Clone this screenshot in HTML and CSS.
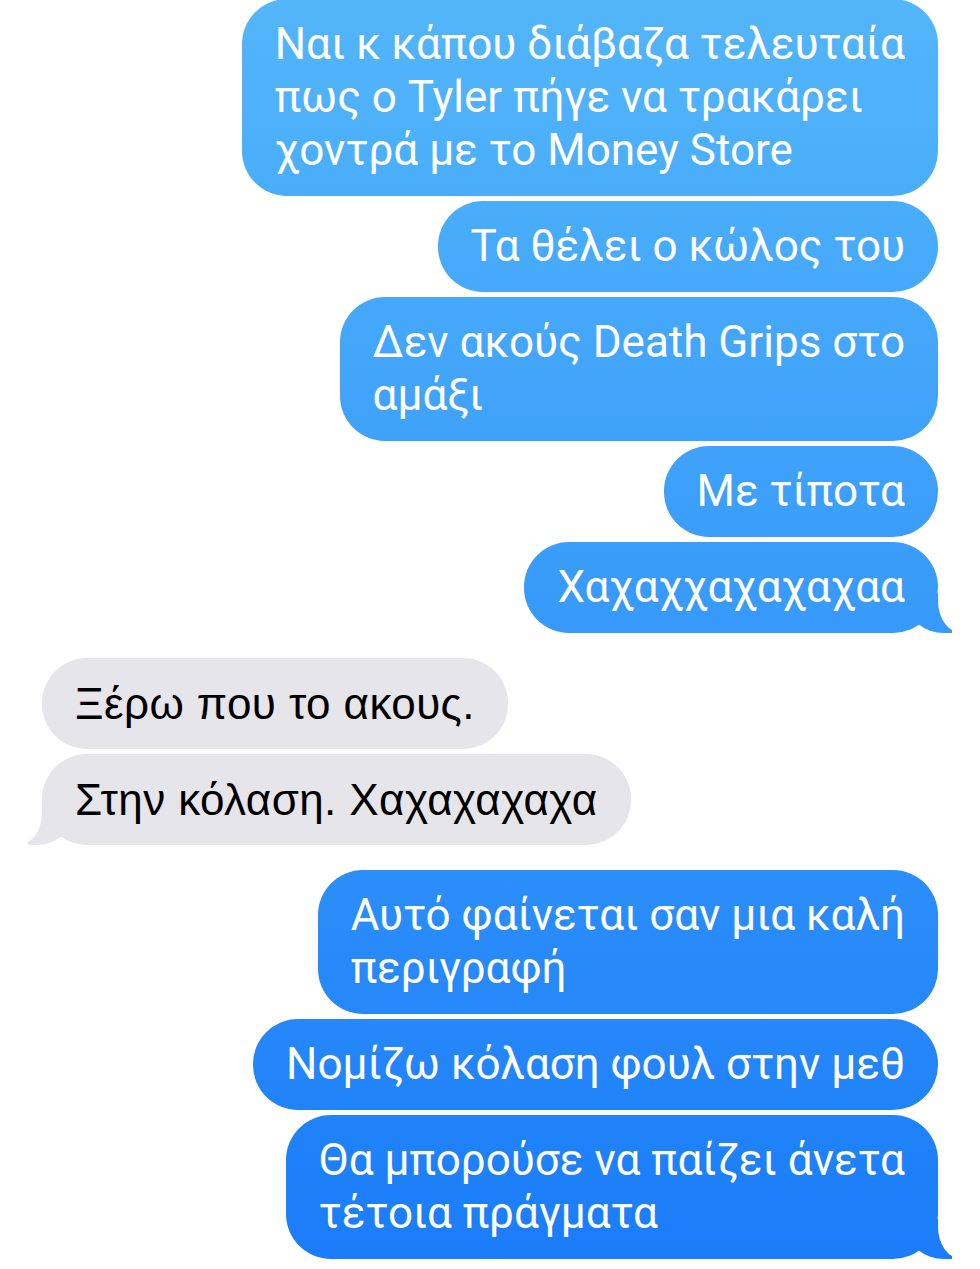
FILE: index.html
```html
<!DOCTYPE html>
<html lang="el">
<head>
  <meta charset="UTF-8">
  <title>Μηνύματα</title>
  <meta name="viewport" content="width=device-width, initial-scale=1.0">
  <link rel="stylesheet" href="styles.css">
</head>
<body>
  <div class="chat">
    <div class="group sent">
      <p class="bubble">Ναι κ κάπου διάβαζα τελευταία<br>πως ο Tyler πήγε να τρακάρει<br>χοντρά με το Money Store</p>
      <p class="bubble">Τα θέλει ο κώλος του</p>
      <p class="bubble">Δεν ακούς Death Grips στο<br>αμάξι</p>
      <p class="bubble">Με τίποτα</p>
      <p class="bubble tail">Χαχαχχαχαχαχαα</p>
    </div>

    <div class="group received">
      <p class="bubble">Ξέρω που το ακους.</p>
      <p class="bubble tail">Στην κόλαση. Χαχαχαχαχα</p>
    </div>

    <div class="group sent">
      <p class="bubble">Αυτό φαίνεται σαν μια καλή<br>περιγραφή</p>
      <p class="bubble">Νομίζω κόλαση φουλ στην μεθ</p>
      <p class="bubble tail">Θα μπορούσε να παίζει άνετα<br>τέτοια πράγματα</p>
    </div>
  </div>
</body>
</html>
```

FILE: styles.css
```css
body {
  margin: 0;
  background: #fff;
  font-family: 'Roboto', 'Noto Sans', sans-serif;
}

.chat {
  display: flex;
  flex-direction: column;
  gap: 25px;
  padding: 0 42px;
  margin-top: -1px;
}

.group {
  display: flex;
  flex-direction: column;
  gap: 5px;
}

.sent {
  align-items: flex-end;
}

.received {
  align-items: flex-start;
}

.bubble {
  position: relative;
  margin: 0;
  padding: 19px 33px;
  border-radius: 45px;
  font-size: 44px;
  line-height: 53px;
  white-space: nowrap;
}

.sent .bubble {
  color: #fff;
  background: linear-gradient(#53b6fa, #1a7cf9) fixed;
}

.received .bubble {
  color: #000;
  background: #e5e5ea;
  font-family: 'Liberation Sans', Arial, sans-serif;
  letter-spacing: 0.4px;
}

/* bubble tail */
.tail::before,
.tail::after {
  content: "";
  position: absolute;
  bottom: 0;
  height: 40px;
}

.sent .tail::before {
  right: -14px;
  width: 44px;
  background: linear-gradient(#53b6fa, #1a7cf9) fixed;
  border-bottom-left-radius: 36px 30px;
}

.sent .tail::after {
  right: -60px;
  width: 60px;
  background: #fff;
  border-bottom-left-radius: 24px 32px;
}

.received .tail::before {
  left: -14px;
  width: 44px;
  background: #e5e5ea;
  border-bottom-right-radius: 36px 30px;
}

.received .tail::after {
  left: -60px;
  width: 60px;
  background: #fff;
  border-bottom-right-radius: 24px 32px;
}
```
